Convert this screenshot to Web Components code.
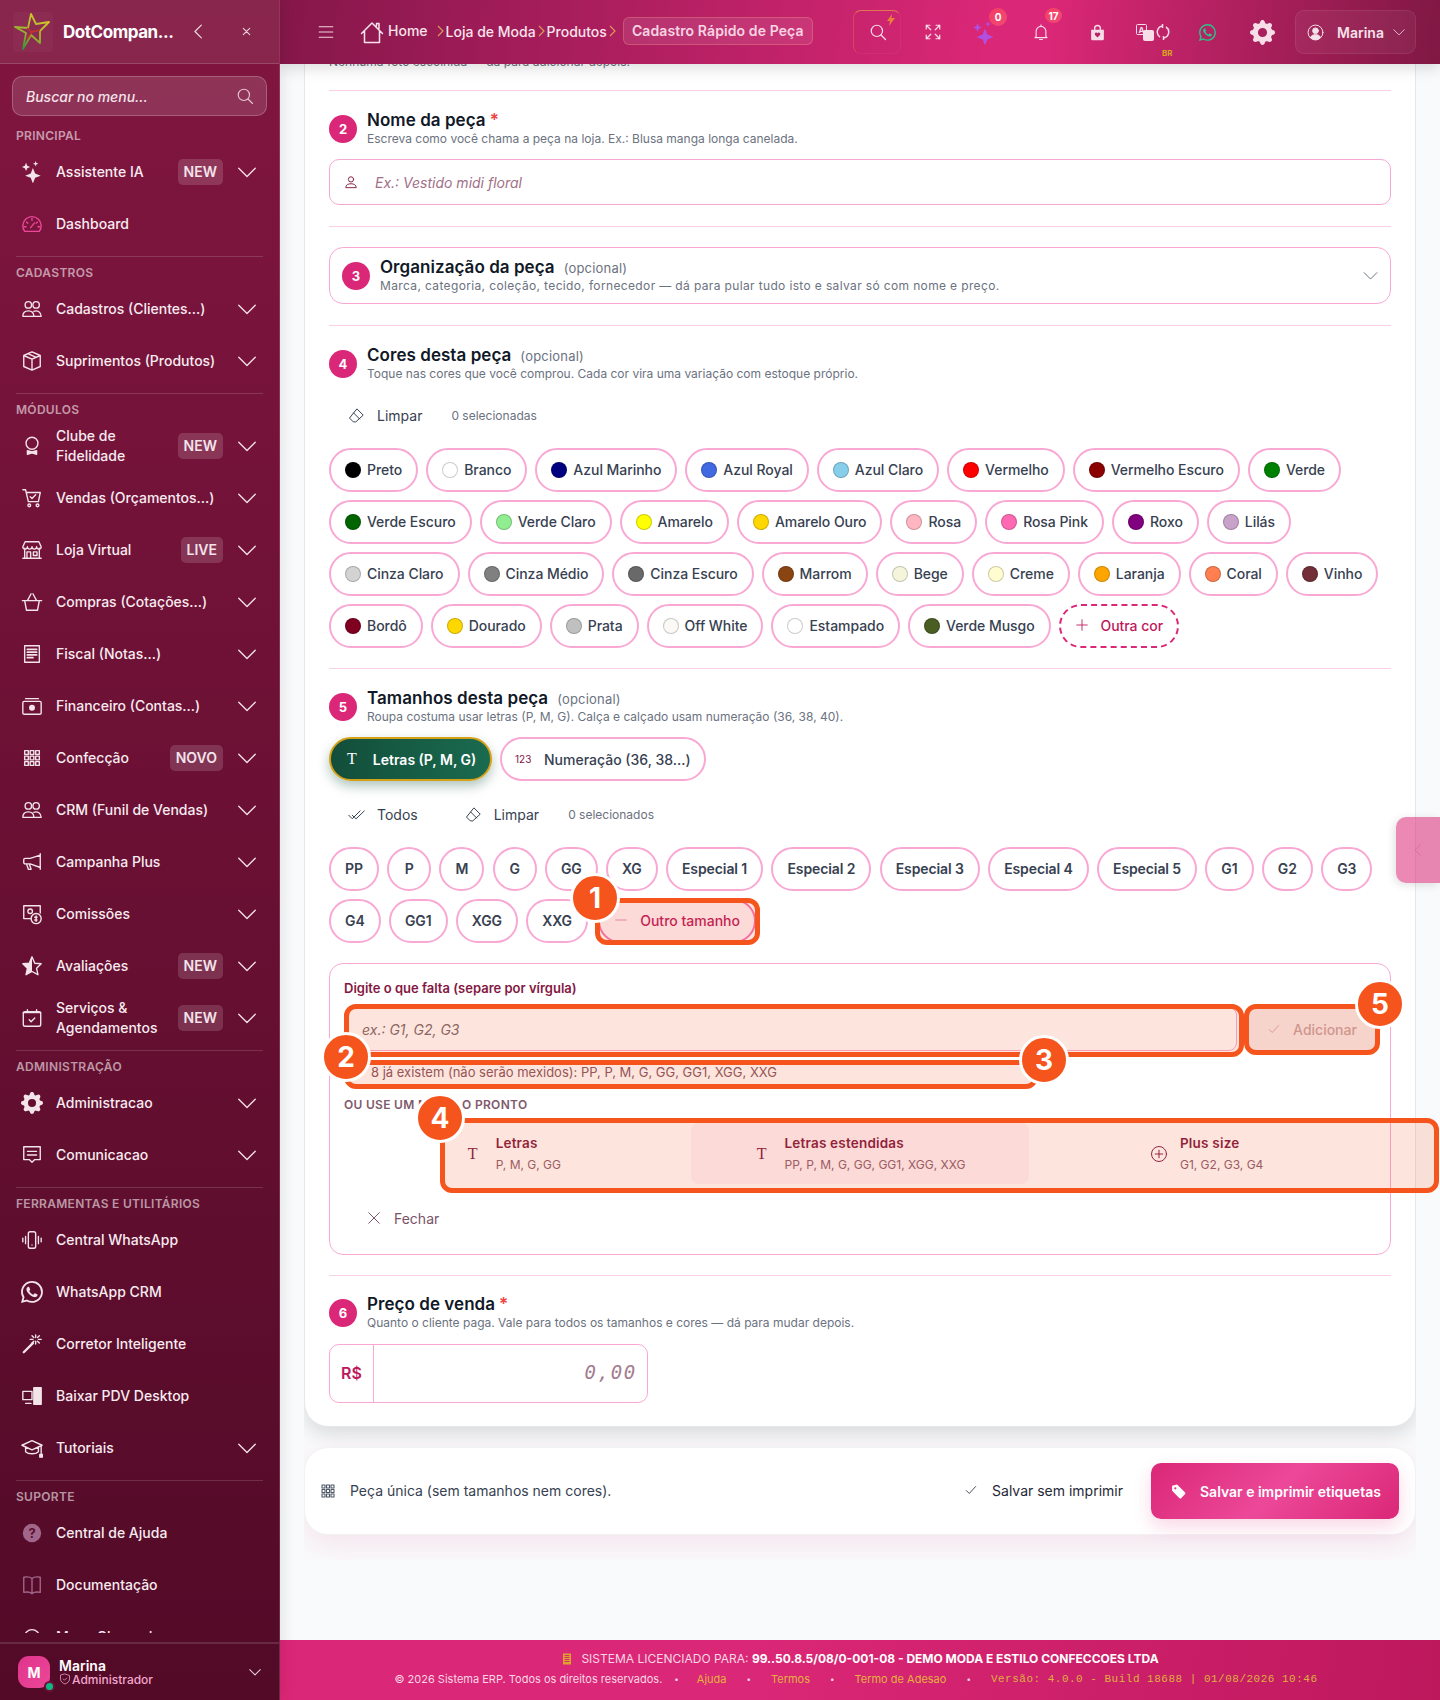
<!doctype html>
<html lang="pt-BR">
<head>
<meta charset="utf-8">
<title>Cadastro Rápido de Peça</title>
<style>
  html, body { margin: 0; padding: 0; height: 100%; }
  body { font-family: Inter, "Liberation Sans", sans-serif; background: #f9fafb; color: #1f2937; }
</style>
</head>
<body>
<app-shell>
  <side-bar slot="side">
    <nav-group heading="PRINCIPAL" first>
      <nav-item icon="sparkles" badge="NEW" more>Assistente IA</nav-item>
      <nav-item icon="gauge" tint="#ec4899">Dashboard</nav-item>
    </nav-group>
    <nav-group heading="CADASTROS">
      <nav-item icon="users" more>Cadastros (Clientes...)</nav-item>
      <nav-item icon="box" more>Suprimentos (Produtos)</nav-item>
    </nav-group>
    <nav-group heading="MÓDULOS">
      <nav-item icon="award" badge="NEW" more>Clube de Fidelidade</nav-item>
      <nav-item icon="cart" more>Vendas (Orçamentos...)</nav-item>
      <nav-item icon="shop" badge="LIVE" more>Loja Virtual</nav-item>
      <nav-item icon="basket" more>Compras (Cotações...)</nav-item>
      <nav-item icon="receipt" more>Fiscal (Notas...)</nav-item>
      <nav-item icon="cash" more>Financeiro (Contas...)</nav-item>
      <nav-item icon="grid" badge="NOVO" more>Confecção</nav-item>
      <nav-item icon="users" more>CRM (Funil de Vendas)</nav-item>
      <nav-item icon="megaphone" more>Campanha Plus</nav-item>
      <nav-item icon="coin" more>Comissões</nav-item>
      <nav-item icon="star" badge="NEW" more>Avaliações</nav-item>
      <nav-item icon="calendar" badge="NEW" more>Serviços &amp; Agendamentos</nav-item>
    </nav-group>
    <nav-group heading="ADMINISTRAÇÃO">
      <nav-item icon="gear" more>Administracao</nav-item>
      <nav-item icon="chat" more>Comunicacao</nav-item>
    </nav-group>
    <nav-group heading="FERRAMENTAS E UTILITÁRIOS">
      <nav-item icon="phone">Central WhatsApp</nav-item>
      <nav-item icon="whatsapp">WhatsApp CRM</nav-item>
      <nav-item icon="magic">Corretor Inteligente</nav-item>
      <nav-item icon="pc">Baixar PDV Desktop</nav-item>
      <nav-item icon="school" more>Tutoriais</nav-item>
    </nav-group>
    <nav-group heading="SUPORTE">
      <nav-item icon="help" tint="#a0678a">Central de Ajuda</nav-item>
      <nav-item icon="book" tint="#a0678a">Documentação</nav-item>
      <nav-item icon="headset">Meus Chamados</nav-item>
    </nav-group>
  </side-bar>

  <top-bar slot="top"></top-bar>

  <form-card>
    <p-hint>Nenhuma foto escolhida — dá para adicionar depois.</p-hint>
    <h-rule></h-rule>

    <step-head num="2" heading="Nome da peça" req>Escreva como você chama a peça na loja. Ex.: Blusa manga longa canelada.</step-head>
    <text-box icon="person">Ex.: Vestido midi floral</text-box>
    <h-rule></h-rule>

    <org-box></org-box>
    <h-rule></h-rule>

    <step-head num="4" heading="Cores desta peça" opt>Toque nas cores que você comprou. Cada cor vira uma variação com estoque próprio.</step-head>
    <tool-row count="0 selecionadas"></tool-row>
    <pill-wrap style="margin-bottom:-1px">
      <color-pill c="#000000">Preto</color-pill>
      <color-pill c="#ffffff">Branco</color-pill>
      <color-pill c="#000080">Azul Marinho</color-pill>
      <color-pill c="#4169e1">Azul Royal</color-pill>
      <color-pill c="#87ceeb">Azul Claro</color-pill>
      <color-pill c="#ff0000">Vermelho</color-pill>
      <color-pill c="#8b0000">Vermelho Escuro</color-pill>
      <color-pill c="#008000">Verde</color-pill>
      <color-pill c="#006400">Verde Escuro</color-pill>
      <color-pill c="#90ee90">Verde Claro</color-pill>
      <color-pill c="#ffff00">Amarelo</color-pill>
      <color-pill c="#ffd700">Amarelo Ouro</color-pill>
      <color-pill c="#ffb6c1">Rosa</color-pill>
      <color-pill c="#ff69b4">Rosa Pink</color-pill>
      <color-pill c="#800080">Roxo</color-pill>
      <color-pill c="#c8a2c8">Lilás</color-pill>
      <color-pill c="#d3d3d3">Cinza Claro</color-pill>
      <color-pill c="#808080">Cinza Médio</color-pill>
      <color-pill c="#696969">Cinza Escuro</color-pill>
      <color-pill c="#8b4513">Marrom</color-pill>
      <color-pill c="#f5f5dc">Bege</color-pill>
      <color-pill c="#fffdd0">Creme</color-pill>
      <color-pill c="#ffa500">Laranja</color-pill>
      <color-pill c="#ff7f50">Coral</color-pill>
      <color-pill c="#722f37">Vinho</color-pill>
      <color-pill c="#800020">Bordô</color-pill>
      <color-pill c="#ffd700">Dourado</color-pill>
      <color-pill c="#c0c0c0">Prata</color-pill>
      <color-pill c="#faf9f6">Off White</color-pill>
      <color-pill c="#ffffff">Estampado</color-pill>
      <color-pill c="#4a5d23">Verde Musgo</color-pill>
      <color-pill extra>Outra cor</color-pill>
    </pill-wrap>
    <h-rule></h-rule>

    <step-head num="5" heading="Tamanhos desta peça" opt>Roupa costuma usar letras (P, M, G). Calça e calçado usam numeração (36, 38, 40).</step-head>
    <mode-toggle></mode-toggle>
    <tool-row all count="0 selecionados"></tool-row>
    <pill-wrap wide>
      <size-pill>PP</size-pill><size-pill>P</size-pill><size-pill>M</size-pill><size-pill>G</size-pill>
      <size-pill>GG</size-pill><size-pill>XG</size-pill><size-pill>Especial 1</size-pill><size-pill>Especial 2</size-pill>
      <size-pill>Especial 3</size-pill><size-pill>Especial 4</size-pill><size-pill>Especial 5</size-pill>
      <size-pill>G1</size-pill><size-pill>G2</size-pill><size-pill>G3</size-pill><size-pill>G4</size-pill>
      <size-pill>GG1</size-pill><size-pill>XGG</size-pill><size-pill>XXG</size-pill>
      <size-pill active>Outro tamanho</size-pill>
    </pill-wrap>
    <size-panel></size-panel>
    <h-rule style="margin-top:20px"></h-rule>

    <step-head num="6" heading="Preço de venda" req style="margin-top:-1px">Quanto o cliente paga. Vale para todos os tamanhos e cores — dá para mudar depois.</step-head>
    <price-box></price-box>
  </form-card>

  <action-bar></action-bar>

  <bottom-bar slot="foot"></bottom-bar>

  <side-tab slot="over"></side-tab>
  <anno-box slot="over" x="595" y="898" w="165" h="47"></anno-box>
  <anno-box slot="over" x="344" y="1004" w="900" h="53"></anno-box>
  <anno-box slot="over" x="344" y="1060" w="694" h="29" flat></anno-box>
  <anno-box slot="over" x="440" y="1118" w="999" h="75"></anno-box>
  <anno-box slot="over" x="1244" y="1004" w="136" h="51"></anno-box>
  <anno-num slot="over" x="595" y="898">1</anno-num>
  <anno-num slot="over" x="346" y="1057">2</anno-num>
  <anno-num slot="over" x="1044" y="1060">3</anno-num>
  <anno-num slot="over" x="440" y="1118">4</anno-num>
  <anno-num slot="over" x="1380" y="1004">5</anno-num>
</app-shell>

<script>
/**
 * Icon bodies. Most use a 24 box with strokes, the ones marked fill16 are filled in a 16 box.
 */
const GEAR = 'M9.405 1.05c-.413-1.4-2.397-1.4-2.81 0l-.1.34a1.464 1.464 0 0 1-2.105.872l-.31-.17c-1.283-.698-2.686.705-1.987 1.987l.169.311c.446.82.023 1.841-.872 2.105l-.34.1c-1.4.413-1.4 2.397 0 2.81l.34.1a1.464 1.464 0 0 1 .872 2.105l-.17.31c-.698 1.283.705 2.686 1.987 1.987l.311-.169a1.464 1.464 0 0 1 2.105.872l.1.34c.413 1.4 2.397 1.4 2.81 0l.1-.34a1.464 1.464 0 0 1 2.105-.872l.31.17c1.283.698 2.686-.705 1.987-1.987l-.169-.311a1.464 1.464 0 0 1 .872-2.105l.34-.1c1.4-.413 1.4-2.397 0-2.81l-.34-.1a1.464 1.464 0 0 1-.872-2.105l.17-.31c.698-1.283-.705-2.686-1.987-1.987l-.311.169a1.464 1.464 0 0 1-2.105-.872l-.1-.34zM8 10.93a2.929 2.929 0 1 1 0-5.86 2.929 2.929 0 0 1 0 5.858z'
const WA = 'M13.601 2.326A7.854 7.854 0 0 0 7.994 0C3.627 0 .068 3.558.064 7.926c0 1.399.366 2.76 1.057 3.965L0 16l4.204-1.102a7.933 7.933 0 0 0 3.79.965h.004c4.368 0 7.926-3.558 7.93-7.93A7.898 7.898 0 0 0 13.6 2.326zM7.994 14.521a6.573 6.573 0 0 1-3.356-.92l-.24-.144-2.494.654.666-2.433-.156-.251a6.56 6.56 0 0 1-1.007-3.505c0-3.626 2.957-6.584 6.591-6.584a6.56 6.56 0 0 1 4.66 1.931 6.557 6.557 0 0 1 1.928 4.66c-.004 3.639-2.961 6.592-6.592 6.592zm3.615-4.934c-.197-.099-1.17-.578-1.353-.646-.182-.065-.315-.099-.445.099-.133.197-.513.646-.627.775-.114.133-.232.148-.43.05-.197-.1-.836-.308-1.592-.985-.59-.525-.985-1.175-1.103-1.372-.114-.198-.011-.304.088-.403.087-.088.197-.232.296-.346.1-.114.133-.198.198-.33.065-.134.034-.248-.015-.347-.05-.099-.445-1.076-.612-1.47-.16-.389-.323-.335-.445-.34-.114-.007-.247-.007-.38-.007a.729.729 0 0 0-.529.247c-.182.198-.691.677-.691 1.654 0 .977.71 1.916.81 2.049.098.133 1.394 2.132 3.383 2.992.47.205.84.326 1.129.418.475.152.904.129 1.246.08.38-.058 1.171-.48 1.338-.943.164-.464.164-.86.114-.943-.049-.084-.182-.133-.38-.232z'
const ICONS = {
  sparkles: '<path fill="currentColor" stroke="none" d="M13 7.500l2.400 6.100 6.100 2.400-6.100 2.400L13 24.500l-2.400-6.100L4.500 16l6.100-2.400zM5.500 2l1.300 3.200L10 6.500 6.800 7.800 5.500 11 4.200 7.800 1 6.500l3.200-1.300zM16 0l.8 2.200 2.200.8-2.200.8L16 6l-.8-2.200L13 3l2.200-.8z"/>',
  gauge: '<path d="M4 20a10 10 0 1 1 16 0z"/><path d="M12 6v2M6 10l1.500 1M18 10l-1.500 1M10.500 16l4-5M3.500 15h2M18.500 15h2"/>',
  users: '<circle cx="8" cy="7.500" r="3.500"/><circle cx="16.500" cy="7.500" r="3.500"/><path d="M2 20c0-4 2.500-6 6-6s6 2 6 6zM14 14.500c4-1.500 8 1 8 5.500h-8"/>',
  box: '<path d="M12 2l9 4v12l-9 4-9-4V6zM3 6l9 4 9-4M12 10v12M7.500 4l9 4"/>',
  award: '<circle cx="12" cy="9" r="6.500"/><path fill="currentColor" d="M7 17l5 1.500L17 17v4l-5-1.500L7 21z"/>',
  cart: '<path d="M2 3h3l3 13h11l2-10H6"/><circle cx="9" cy="20" r="1.500"/><circle cx="18" cy="20" r="1.500"/><path d="M10 10.500l2 2 4-4"/>',
  shop: '<path d="M4 10v11h16V10M2 21h20M4.500 3h15l2.500 5.500a2.500 2.500 0 0 1-5 0 2.500 2.500 0 0 1-5 0 2.500 2.500 0 0 1-5 0 2.500 2.500 0 0 1-5 0zM6.500 14h4v7h-4zM13.500 14h4v4h-4z"/>',
  basket: '<path d="M1.500 10.500h21M4 10.500L6 21h12l2-10.500M7 10.500L11 3M17 10.500L13 3"/>',
  receipt: '<path d="M4 3h16v18H4z"/><path d="M7 7h10M7 10h10M7 13h10M7 16h6" stroke-width="2"/>',
  cash: '<rect x="2" y="7" width="20" height="14" rx="1.500"/><path d="M5 4h14"/><circle cx="12" cy="14" r="2.500" fill="currentColor"/>',
  grid: '<path d="M4 4h4v4H4zM10 4h4v4h-4zM16 4h4v4h-4zM4 10h4v4H4zM10 10h4v4h-4zM16 10h4v4h-4zM4 16h4v4H4zM10 16h4v4h-4zM16 16h4v4h-4z"/>',
  megaphone: '<path d="M21 3v17M21 4.500L10 8H4.500A1.500 1.500 0 0 0 3 9.500v3A1.500 1.500 0 0 0 4.500 14H10l11 4M6 14l2 6h3l-2-6"/>',
  coin: '<path d="M11 17H3V3h18v8"/><circle cx="10" cy="9" r="2.500"/><circle cx="16.500" cy="17" r="5.500"/><path d="M16.500 14v6M15 15.500h2.500M15 18.500h2.500"/>',
  star: '<path fill="currentColor" stroke="none" d="M12 2v16l-6.500 3.500L7 14.500l-5-5L9 9z"/><path d="M12 2l3 7 7 .5-5 5 1.500 7L12 18l-6.500 3.500L7 14.500l-5-5L9 9z"/>',
  calendar: '<rect x="2.500" y="5" width="19" height="16" rx="2"/><path d="M7 3v3M17 3v3M2.500 6h19M9 14l2 2 4-4"/>',
  gear: '<g transform="scale(1.500)" fill="currentColor" stroke="none"><path d="' + GEAR + '"/></g>',
  chat: '<path d="M3 3h18v14h-6l-3 3-3-3H3zM7 8h10M7 12h10"/>',
  phone: '<rect x="8" y="3" width="8" height="18" rx="2"/><path d="M5 8v8M19 8v8M2 10v4M22 10v4M12 17.500v.01"/>',
  whatsapp: '<g transform="scale(1.500)" fill="currentColor" stroke="none"><path d="' + WA + '"/></g>',
  magic: '<path d="M3 21L13 11" stroke-width="2.500"/><path d="M16 2v3M16 9v3M10 7h3M19 7h3M12 3l2 2M20 3l-2 2M12 11l2-2M20 11l-2-2"/>',
  pc: '<path d="M2 7h10v9H2zM5 20h6"/><path fill="currentColor" d="M14 3h8v18h-8z"/>',
  school: '<path d="M12 4L1 9l11 5 11-5zM5 11v5c3 3 11 3 14 0v-5M22 10v8"/><rect x="20.500" y="19" width="3" height="3" fill="currentColor"/>',
  help: '<circle cx="12" cy="12" r="10" fill="currentColor" stroke="none"/><text x="12" y="17" text-anchor="middle" font-size="14" font-weight="700" fill="#5c0d2e" stroke="none" font-family="Inter, sans-serif">?</text>',
  book: '<path d="M12 5C10 3 6 3 3 3.500V20c3-.5 7-.5 9 1.500 2-2 6-2 9-1.500V3.500C18 3 14 3 12 5zM12 5v16.500"/>',
  headset: '<path d="M4 14v-2a8 8 0 0 1 16 0v2"/>',
  chevDown: '<path d="M3 8l9 9 9-9"/>',
  chevLeft: '<path d="M16 3l-9 9 9 9"/>',
  x: '<path d="M5 5l14 14M19 5L5 19"/>',
  search: '<circle cx="10.500" cy="10.500" r="7.500"/><path d="M16 16l6 6"/>',
  home: '<path d="M1.500 12.500L12 2l10.500 10.500M4.500 10v11.500h15V10M16.500 5V2.500h2.500v5"/>',
  list: '<path d="M3 5h18M3 12h18M3 19h18"/>',
  full: '<path d="M3 8V3h5M3 3l6 6M21 8V3h-5M21 3l-6 6M3 16v5h5M3 21l6-6M21 16v5h-5M21 21l-6-6"/>',
  bell: '<path d="M5.500 18v-7a6.500 6.500 0 0 1 13 0v7l1.500 1.500H4zM10 22h4M12 2.500v2"/>',
  bag: '<path fill="currentColor" stroke="none" d="M3 8h18v13a2 2 0 0 1-2 2H5a2 2 0 0 1-2-2z"/><path d="M8 8V6a4 4 0 0 1 8 0v2" stroke-width="2"/><path fill="#b92262" stroke="none" d="M12 19l-3.500-3.500a2 2 0 0 1 3.500-2.500 2 2 0 0 1 3.500 2.500z"/>',
  userCircle: '<circle cx="12" cy="12" r="10.500"/><circle cx="12" cy="9.500" r="4" fill="currentColor"/><path fill="currentColor" d="M5 19c1-3 4-4 7-4s6 1 7 4c-2 2-4.500 3-7 3s-5-1-7-3z"/>',
  person: '<circle cx="12" cy="7.500" r="4.500"/><path d="M3 21c0-4 4-6 9-6s9 2 9 6z"/>',
  eraser: '<path d="M13 3l8.500 8.500L11 21H7.500L2.500 16zM8 8.500L16.500 17"/>',
  check: '<path d="M4 13l5 5L20 6"/>',
  checkAll: '<path d="M1 13l5 5L17 7M10 17l1.500 1L23 7M6 13l3 3"/>',
  plus: '<path d="M12 3v18M3 12h18"/>',
  dash: '<path d="M3 12h18"/>',
  plusCircle: '<circle cx="12" cy="12" r="10"/><path d="M12 7v10M7 12h10"/>',
  tag: '<path fill="currentColor" stroke="none" d="M3 4l7-2 11 11a2 2 0 0 1 0 3l-5 5a2 2 0 0 1-3 0L3 11zM7.500 6a1.500 1.500 0 1 0 .01 3 1.500 1.500 0 0 0-.01-3z"/>',
  building: '<path fill="currentColor" stroke="none" d="M4 1h16v22H4z"/><path stroke="#d92775" stroke-width="2" d="M8 5h8M8 9h8M8 13h8M8 17h8"/>',
  shield: '<path d="M12 2l9 3v7c0 5-4 8-9 10-5-2-9-5-9-10V5zM8.500 12l2.500 2.500 4.500-4.500"/>'
}

/**
 * Small helper, builds one inline svg string.
 *
 * @param {string} name Key in ICONS.
 * @param {number} size Width and height in pixels.
 * @param {number} sw Stroke width in the 24 box.
 * @returns {string} The markup.
 */
function ic (name, size, sw = 1.5) {
  return `<svg width="${size}" height="${size}" viewBox="0 0 24 24" fill="none" stroke="currentColor" stroke-width="${sw}" stroke-linecap="round" stroke-linejoin="round" style="display:block;flex:none">${ICONS[name]}</svg>`
}

/**
 * Base class: renders the html given by render() in an open shadow root.
 */
class Base extends HTMLElement {
  constructor () {
    super()
    this.attachShadow({ mode: 'open' })
  }

  connectedCallback () {
    this.shadowRoot.innerHTML = this.render()
  }
}

class AppShell extends Base {
  render () {
    return `<style>
      :host { display: grid; grid-template-columns: 280px 1fr; grid-template-rows: 64px 1fr 60px; height: 1700px; width: 1440px; position: relative; overflow: hidden; }
      .side { grid-row: 1 / 4; z-index: 3; min-height: 0; display: flex; }
      .top { z-index: 2; }
      .main { min-height: 0; position: relative; background: #f9fafb; }
      .scroll { margin: 0 24px; height: 1496px; overflow: hidden; }
      .foot { z-index: 2; }
      .over { position: absolute; left: 0; top: 0; width: 0; height: 0; z-index: 1; }
    </style>
    <div class="side"><slot name="side"></slot></div>
    <div class="top"><slot name="top"></slot></div>
    <div class="main"><div class="scroll"><slot></slot></div></div>
    <div class="foot"><slot name="foot"></slot></div>
    <div class="over"><slot name="over"></slot></div>`
  }
}
customElements.define('app-shell', AppShell)

class SideBar extends Base {
  render () {
    return `<style>
      :host { display: flex; flex-direction: column; width: 280px; height: 1700px; box-sizing: border-box; background: linear-gradient(180deg, #811640 0%, #520a27 100%); border-right: 1px solid rgba(255,255,255,.14); box-shadow: 2px 0 14px rgba(0,0,0,.1); color: #fff; }
      header { height: 64px; flex: none; box-sizing: border-box; display: flex; align-items: center; background: rgba(255,255,255,.07); border-bottom: 1px solid rgba(255,255,255,.16); padding-left: 13px; }
      .logo { width: 40px; height: 40px; flex: none; }
      .brand { font-size: 17px; font-weight: 700; letter-spacing: -.45px; margin-left: 10px; width: 112px; white-space: nowrap; }
      .back { margin-left: 15px; color: #ecd3dd; }
      .close { margin-left: 34px; color: #ecd3dd; }
      .search { margin: 12px 12px 12px; height: 40px; box-sizing: border-box; flex: none; border: 1px solid rgba(255,255,255,.22); border-radius: 10px; background: rgba(255,255,255,.13); display: flex; align-items: center; justify-content: space-between; padding: 0 12px 0 13px; font-size: 14px; font-style: italic; font-weight: 500; color: #f5e3ea; }
      .search svg { color: #e7c6d3; }
      nav { height: 1505px; flex: none; overflow: hidden; padding: 0 12px; display: flex; flex-direction: column; }
      .user { margin-top: 9px; flex: 1; box-sizing: border-box; border-top: 2px solid rgba(255,255,255,.13); display: flex; align-items: center; padding-left: 18px; position: relative; }
      .ava { width: 32px; height: 32px; border-radius: 11px; background: linear-gradient(135deg, #e0338b, #ec4899); display: grid; place-items: center; font-size: 14px; font-weight: 700; position: relative; flex: none; }
      .ava i { position: absolute; right: -3px; bottom: -2px; width: 7px; height: 7px; border-radius: 50%; background: #10b981; box-shadow: 0 0 0 2px #6b0f3a; }
      .who { margin-left: 9px; line-height: 13px; }
      .who b { display: block; font-size: 14px; font-weight: 600; line-height: 14px; }
      .who span { display: flex; align-items: center; font-size: 12px; font-weight: 500; color: #f3a6cd; gap: 1px; }
      .caret { position: absolute; left: 248px; top: 21px; color: #e6cdd8; }
    </style>
    <header>
      <svg class="logo" viewBox="0 0 40 40" fill="none">
        <defs><linearGradient id="lg" x1="0.7" y1="0" x2="0.2" y2="1"><stop offset="0" stop-color="#d8c52a"/><stop offset=".55" stop-color="#9fb52e"/><stop offset="1" stop-color="#2f8f3a"/></linearGradient></defs>
        <rect width="40" height="40" rx="4" fill="#fff" fill-opacity=".03"/>
        <path d="M18 2l5 10 13-2-9 9 0 12-9-8-8 14 3-16-11-6 13 1z" stroke="url(#lg)" stroke-width="1.800" stroke-linejoin="round"/>
        <path d="M14 16l5 4-5 7M27 18l-9 2" stroke="#c4352b" stroke-width="1.300"/></svg>
      <div class="brand">DotCompan...</div>
      <div class="back">${ic('chevLeft', 17, 1.8)}</div>
      <div class="close">${ic('x', 11, 2.4)}</div>
    </header>
    <div class="search"><span>Buscar no menu...</span>${ic('search', 18)}</div>
    <nav><slot></slot></nav>
    <div class="user">
      <div class="ava">M<i></i></div>
      <div class="who"><b>Marina</b><span>${ic('shield', 12)}Administrador</span></div>
      <div class="caret">${ic('chevDown', 14, 1.8)}</div>
    </div>`
  }
}
customElements.define('side-bar', SideBar)

class NavGroup extends Base {
  render () {
    const first = this.hasAttribute('first')
    return `<style>
      :host { display: flex; flex-direction: column; gap: 4px; flex: none; }
      hr { border: 0; height: 1px; background: rgba(255,255,255,.15); margin: 8px 4px; width: 247px; box-sizing: border-box; }
      .t { font-size: 12px; line-height: 16px; font-weight: 600; color: rgba(255,255,255,.58); padding-left: 4px; letter-spacing: .3px; white-space: nowrap; }
      .l { display: flex; flex-direction: column; gap: 4px; }
      .wrap { display: block; }
    </style>
    <div class="wrap">${first ? '' : '<hr>'}<div class="t">${this.getAttribute('heading')}</div></div>
    <div class="l"><slot></slot></div>`
  }
}
customElements.define('nav-group', NavGroup)

class NavItem extends Base {
  render () {
    const badge = this.getAttribute('badge')
    const tint = this.getAttribute('tint')
    return `<style>
      :host { display: flex; align-items: center; height: 48px; flex: none; box-sizing: border-box; padding: 0 9px 0 9px; color: #f7ebf0; font-size: 14px; font-weight: 500; line-height: 20px; }
      .i { width: 22px; height: 22px; margin-right: 13px; flex: none; color: ${tint || '#f3e4ea'}; }
      .tx { flex: 1; min-width: 0; }
      .b { flex: none; height: 26px; line-height: 26px; padding: 0 6px; border-radius: 5px; background: rgba(255,255,255,.15); font-weight: 600; color: #f4e3ea; margin-left: 6px; margin-right: 13px; }
      .c { flex: none; color: #f0dfe6; }
    </style>
    <div class="i">${ic(this.getAttribute('icon'), 22)}</div>
    <div class="tx"><slot></slot></div>
    ${badge ? `<div class="b">${badge}</div>` : ''}
    ${this.hasAttribute('more') ? `<div class="c">${ic('chevDown', 22, 1.5)}</div>` : ''}`
  }
}
customElements.define('nav-item', NavItem)

class TopBar extends Base {
  render () {
    const sep = '<svg width="7" height="12" viewBox="0 0 7 12" fill="none" stroke="#d99a55" stroke-width="1.200" style="flex:none"><path d="M1 1l5 5-5 5"/></svg>'
    return `<style>
      :host { display: flex; align-items: center; height: 64px; box-sizing: border-box; background: linear-gradient(95deg, #85174a 0%, #db2777 62%, #db2777 66%, #7f1843 100%); box-shadow: 0 4px 14px rgba(0,0,0,.14); color: #f9e3ec; font-size: 14px; font-weight: 500; position: relative; }
      .burger { margin-left: 37px; width: 18px; color: #f3d3e0; }
      .crumbs { display: flex; align-items: center; margin-left: 25px; margin-bottom: 2px; white-space: nowrap; }
      .crumbs .home { display: flex; align-items: center; gap: 4px; margin-right: 9px; }
      .crumbs .home svg { position: relative; top: 2px; }
      .crumbs .home span { position: relative; top: -1px; }
      .cur { margin-left: 7px; height: 28px; line-height: 26px; box-sizing: border-box; padding: 0 8px; border: 1px solid rgba(255,190,140,.25); border-radius: 6px; background: rgba(255,255,255,.09); font-weight: 600; color: #f8d3e2; letter-spacing: .1px; }
      .tools { position: absolute; left: 570px; top: 0; display: flex; height: 64px; align-items: center; }
      .t { width: 55px; height: 44px; display: grid; place-items: center; position: relative; color: #f6dde8; }
      .sb { position: absolute; left: 3px; top: 0; width: 46px; height: 42px; border-radius: 8px; border: 1px solid rgba(255,255,255,.05); border-top-color: rgba(240,150,70,.7); border-left-color: rgba(240,150,70,.3); }
      .bolt { position: absolute; left: 37px; top: 4px; }
      .n { position: absolute; border-radius: 50%; background: linear-gradient(135deg, #f43f5e, #ef4a78); color: #fff; font-size: 10px; font-weight: 700; width: 18px; height: 18px; display: grid; place-items: center; }
      .tr { display: flex; gap: 2px; align-items: center; }
      .br { position: absolute; left: 37px; top: 38px; font-size: 8px; font-weight: 700; color: #d9a520; }
      .user { position: absolute; left: 1015px; top: 10px; width: 121px; height: 44px; box-sizing: border-box; border: 1px solid rgba(255,255,255,.08); border-radius: 9px; background: rgba(255,255,255,.05); display: flex; align-items: center; padding-left: 11px; font-weight: 600; color: #f6e1ea; }
      .user b { font-weight: 600; margin-left: 13px; margin-right: 8px; }
    </style>
    <div class="burger">${ic('list', 18, 1.6)}</div>
    <div class="crumbs">
      <div class="home">${ic('home', 24)}<span>Home</span></div>
      ${sep}
      <span style="margin:0 2px 0 2px">Loja de Moda</span>
      ${sep}
      <span style="margin:0 2px 0 2px">Produtos</span>
      ${sep}
      <div class="cur">Cadastro Rápido de Peça</div>
    </div>
    <div class="tools">
      <div class="t"><div class="sb"></div>${ic('search', 18, 1.6)}<svg class="bolt" width="8" height="12" viewBox="0 0 8 12"><path fill="#e8803a" d="M5 0L0 7h3l-1 5 6-8H4.500z"/></svg></div>
      <div class="t">${ic('full', 18, 1.6)}</div>
      <div class="t" style="color:#b04fe0"><div style="position:relative;top:1px;left:-4px">${ic('sparkles', 24)}</div><div class="n" style="left:29px;top:-2px">0</div></div>
      <div class="t" style="left:-2px">${ic('bell', 18, 1.5)}<div class="n" style="left:32px;top:-2px;height:15px;width:17px">17</div></div>
      <div class="t">${ic('bag', 17)}</div>
      <div class="t"><div class="tr"><svg width="18" height="17" viewBox="0 0 18 17" fill="none" stroke="currentColor"><rect x=".5" y=".5" width="10" height="10" rx="1"/><rect x="7.500" y="6.500" width="10" height="10" rx="1" fill="currentColor"/><text x="5.500" y="8.500" text-anchor="middle" font-size="8" font-weight="700" fill="currentColor" stroke="none" font-family="Inter, sans-serif">A</text></svg><svg width="14" height="16" viewBox="0 0 14 16" fill="none" stroke="currentColor" stroke-width="1.500"><path d="M7 2a6 6 0 0 0-3 11M7 14a6 6 0 0 0 3-11"/><path fill="currentColor" d="M6.500 0v4M7.500 12v4"/></svg></div><div class="br">BR</div></div>
      <div class="t" style="color:#2bc48a">${ic('whatsapp', 17)}</div>
      <div class="t">${`<svg width="25" height="25" viewBox="0 0 16 16" fill="currentColor"><path d="${GEAR}"/></svg>`}</div>
    </div>
    <div class="user">${ic('userCircle', 17, 1.4)}<b>Marina</b><span style="color:#e7bccd">${ic('chevDown', 14, 1.6)}</span></div>`
  }
}
customElements.define('top-bar', TopBar)

class FormCard extends Base {
  render () {
    return `<style>
      :host { display: flow-root; box-sizing: border-box; background: #fff; border: 1px solid #e5e7eb; border-top: 0; border-radius: 0 0 24px 24px; padding: 0 24px 24px; box-shadow: 0 8px 18px rgba(0,0,0,.12); height: 1363px; }
    </style><slot></slot>`
  }
}
customElements.define('form-card', FormCard)

class PHint extends Base {
  render () {
    return `<style>
      :host { display: block; height: 14px; line-height: 14px; margin-top: -9px; font-size: 12px; color: #6b7280; word-spacing: .1px; }
    </style><slot></slot>`
  }
}
customElements.define('p-hint', PHint)

class HRule extends Base {
  render () {
    return `<style>
      :host { display: block; height: 1px; background: #fbcfe8; margin: 21px 0 20px; }
    </style>`
  }
}
customElements.define('h-rule', HRule)

class StepHead extends Base {
  render () {
    const opt = this.hasAttribute('opt')
    const req = this.hasAttribute('req')
    return `<style>
      :host { display: flex; align-items: center; gap: 10px; height: 36px; }
      .n { width: 28px; height: 28px; border-radius: 50%; background: #db2777; color: #fff; font-size: 13px; font-weight: 700; display: grid; place-items: center; flex: none; }
      .h { display: flex; align-items: baseline; line-height: 18px; height: 18px; white-space: nowrap; }
      .h b { font-size: 17px; font-weight: 600; color: #111827; letter-spacing: .05px; }
      .h i { font-style: normal; font-size: 13px; color: #6b7280; margin-left: 9px; letter-spacing: .2px; }
      .h u { text-decoration: none; color: #ef4444; margin-left: 4px; font-size: 17px; font-weight: 600; }
      .s { font-size: 12px; line-height: 18px; color: #6b7280; white-space: nowrap; position: relative; top: 1px; }
    </style>
    <div class="n">${this.getAttribute('num')}</div>
    <div>
      <div class="h"><b>${this.getAttribute('heading')}</b>${req ? '<u>*</u>' : ''}${opt ? '<i>(opcional)</i>' : ''}</div>
      <div class="s"><slot></slot></div>
    </div>`
  }
}
customElements.define('step-head', StepHead)

class TextBox extends Base {
  render () {
    return `<style>
      :host { display: flex; align-items: center; height: 46px; box-sizing: border-box; margin-top: 12px; border: 1px solid #f4a9d0; border-radius: 10px; padding-left: 14px; font-size: 14px; font-style: italic; color: #a17088; }
      .i { color: #831843; width: 14px; margin-right: 17px; }
    </style>
    <div class="i">${ic(this.getAttribute('icon'), 14, 1.6)}</div><slot></slot>`
  }
}
customElements.define('text-box', TextBox)

class OrgBox extends Base {
  render () {
    return `<style>
      :host { display: flex; align-items: center; height: 57px; box-sizing: border-box; border: 1px solid #f9a8d4; border-radius: 14px; padding: 0 11px 0 12px; }
      .n { width: 28px; height: 28px; border-radius: 50%; background: #db2777; color: #fff; font-size: 13px; font-weight: 700; display: grid; place-items: center; flex: none; margin-right: 10px; }
      .t { flex: 1; padding-top: 2px; }
      .h { line-height: 18px; white-space: nowrap; }
      .h b { font-size: 17px; font-weight: 600; color: #111827; letter-spacing: .05px; }
      .h i { font-style: normal; font-size: 13px; color: #6b7280; margin-left: 9px; letter-spacing: .2px; }
      .s { font-size: 12px; line-height: 18px; color: #6b7280; white-space: nowrap; letter-spacing: .36px; }
      .c { color: #6b7280; }
    </style>
    <div class="n">3</div>
    <div class="t">
      <div class="h"><b>Organização da peça</b><i>(opcional)</i></div>
      <div class="s">Marca, categoria, coleção, tecido, fornecedor — dá para pular tudo isto e salvar só com nome e preço.</div>
    </div>
    <div class="c">${ic('chevDown', 17, 1.4)}</div>`
  }
}
customElements.define('org-box', OrgBox)

class ToolRow extends Base {
  render () {
    const btn = (icon, tx, gap) => `<div class="b" style="margin-right:${gap}px">${ic(icon, 17, 1.4)}<span>${tx}</span></div>`
    return `<style>
      :host { display: flex; align-items: center; height: 36px; margin: 15px 0 15px; padding-left: 19px; font-size: 14px; color: #1f2937; white-space: nowrap; }
      .b { display: flex; align-items: center; gap: 12px; color: #374151; }
      .cnt { font-size: 12px; color: #6b7280; }
    </style>
    ${this.hasAttribute('all') ? btn('checkAll', 'Todos', 47) : ''}
    ${btn('eraser', 'Limpar', 29)}
    <div class="cnt">${this.getAttribute('count')}</div>`
  }
}
customElements.define('tool-row', ToolRow)

class PillWrap extends Base {
  render () {
    return `<style>
      :host { display: flex; flex-wrap: wrap; gap: 8px ${this.hasAttribute('wide') ? 8.3 : 8}px; }
    </style><slot></slot>`
  }
}
customElements.define('pill-wrap', PillWrap)

class ColorPill extends Base {
  render () {
    const extra = this.hasAttribute('extra')
    return `<style>
      :host { display: inline-flex; align-items: center; height: 44px; box-sizing: border-box; border: 2px ${extra ? 'dashed #db2777' : 'solid #f9a8d4'}; border-radius: 22px; padding: 0 14px 2px; gap: ${extra ? 12 : 6}px; font-size: 14px; font-weight: 500; letter-spacing: -.05px; color: ${extra ? '#be185d' : '#374151'}; white-space: nowrap; }
      .d { width: 14px; height: 14px; border-radius: 50%; border: 1px solid rgba(0,0,0,.2); background: ${this.getAttribute('c')}; flex: none; position: relative; top: 1px; }
      .p { color: #be185d; }
    </style>
    ${extra ? `<div class="p">${ic('plus', 14, 1.5)}</div>` : '<div class="d"></div>'}
    <slot></slot>`
  }
}
customElements.define('color-pill', ColorPill)

class SizePill extends Base {
  render () {
    const on = this.hasAttribute('active')
    return `<style>
      :host { display: inline-flex; align-items: center; justify-content: center; height: 44px; min-width: 44px; box-sizing: border-box; border: 2px solid ${on ? '#f472b6' : '#f9a8d4'}; border-radius: 22px; padding: 0 14px 2px; gap: 12px; font-size: 14px; font-weight: ${on ? 500 : 600}; letter-spacing: ${on ? 0 : -0.1}px; color: ${on ? '#be185d' : '#374151'}; background: ${on ? '#fdf2f8' : '#fff'}; white-space: nowrap; ${on ? 'margin-left: 2px;' : ''} }
      .p { color: #be185d; opacity: .5; }
    </style>
    ${on ? `<div class="p">${ic('dash', 14, 1.5)}</div>` : ''}<slot></slot>`
  }
}
customElements.define('size-pill', SizePill)

class ModeToggle extends Base {
  render () {
    return `<style>
      :host { display: flex; gap: 8px; margin-top: 12px; }
      .m { height: 44px; box-sizing: border-box; border-radius: 22px; display: flex; align-items: center; font-size: 14px; white-space: nowrap; font-weight: 500; }
      .on { background: linear-gradient(90deg, #134e3b, #1a6b50); border: 2px solid #d4a017; color: #fff; font-weight: 600; box-shadow: 0 5px 12px rgba(20,83,63,.35); gap: 16px; width: 163px; padding-left: 16px; }
      .off { border: 2px solid #f9a8d4; color: #374151; gap: 11px; width: 206px; padding-left: 13px; }
      .T { font-family: "Liberation Serif", serif; font-size: 16px; font-weight: 400; }
      .num { font-size: 10px; color: #831843; font-weight: 400; width: 18px; }
    </style>
    <div class="m on"><span class="T">T</span><span>Letras (P, M, G)</span></div>
    <div class="m off"><span class="num">123</span><span>Numeração (36, 38...)</span></div>`
  }
}
customElements.define('mode-toggle', ModeToggle)

class SizePanel extends Base {
  render () {
    const preset = (icon, h, s, cls = '') => `<div class="pr ${cls}"><div class="pi">${icon}</div><div><b>${h}</b><small>${s}</small></div></div>`
    return `<style>
      :host { display: block; box-sizing: border-box; height: 292px; margin-top: 20px; border: 1px solid #f9a8d4; border-radius: 14px; padding: 16px 14px 0; }
      .l { font-size: 13px; line-height: 16px; font-weight: 600; color: #831843; margin-bottom: 11px; }
      .row { display: flex; gap: 11px; }
      .in { flex: 1; height: 44px; box-sizing: border-box; border: 1px solid #f9a8d4; border-radius: 8px; padding-left: 17px; display: flex; align-items: center; font-size: 14px; font-style: italic; color: #7a6a6f; }
      .add { width: 128px; height: 44px; box-sizing: border-box; border-radius: 10px; background: #f8ebea; color: #c9a3a3; display: flex; align-items: center; justify-content: center; gap: 12px; font-size: 14px; font-weight: 500; }
      .help { font-size: 13px; line-height: 16px; color: #86565f; padding-left: 27px; margin-top: 13px; }
      .or { font-size: 12px; line-height: 16px; font-weight: 600; color: #80596b; margin-top: 17px; letter-spacing: .3px; }
      .grid { display: grid; grid-template-columns: repeat(3, 1fr); gap: 8px; margin-top: 10px; }
      .pr { height: 61px; border-radius: 8px; display: flex; align-items: center; justify-content: center; gap: 16px; }
      .pr.hov { background: #fdf2f8; }
      .pi { color: #831843; font-family: "Liberation Serif", serif; font-size: 16px; display: grid; place-items: center; width: 14px; }
      .pr b { display: block; font-size: 13.5px; line-height: 18px; font-weight: 600; color: #831843; letter-spacing: .2px; }
      .pr small { display: block; font-size: 12px; line-height: 18px; margin-top: 4px; color: #8e5d70; }
      .close { display: flex; align-items: center; gap: 11px; height: 36px; margin-top: 16px; padding-left: 21px; font-size: 14px; color: #7a5368; }
    </style>
    <div class="l">Digite o que falta (separe por vírgula)</div>
    <div class="row">
      <div class="in">ex.: G1, G2, G3</div>
      <div class="add">${ic('check', 14, 1.5)}<span>Adicionar</span></div>
    </div>
    <div class="help">8 já existem (não serão mexidos): PP, P, M, G, GG, GG1, XGG, XXG</div>
    <div class="or">OU USE UM MODELO PRONTO</div>
    <div class="grid">
      ${preset('T', 'Letras', 'P, M, G, GG')}
      ${preset('T', 'Letras estendidas', 'PP, P, M, G, GG, GG1, XGG, XXG', 'hov')}
      ${preset(ic('plusCircle', 18, 1.3), 'Plus size', 'G1, G2, G3, G4')}
    </div>
    <div class="close">${ic('x', 18, 1.3)}<span>Fechar</span></div>`
  }
}
customElements.define('size-panel', SizePanel)

class PriceBox extends Base {
  render () {
    return `<style>
      :host { display: flex; width: 319px; height: 59px; box-sizing: border-box; margin-top: 13px; border: 1px solid #f9a8d4; border-radius: 10px; }
      .c { width: 44px; border-right: 1px solid #f9a8d4; display: grid; place-items: center; font-size: 16px; font-weight: 600; color: #be185d; flex: none; padding-bottom: 2px; box-sizing: border-box; }
      .v { flex: 1; display: flex; align-items: center; justify-content: flex-end; padding: 0 10px 4px 0; font-family: "DejaVu Sans Mono", "Liberation Mono", monospace; font-size: 19px; font-style: italic; color: #a47b8e; letter-spacing: 1.700px; }
    </style>
    <div class="c">R$</div><div class="v">0,00</div>`
  }
}
customElements.define('price-box', PriceBox)

class ActionBar extends Base {
  render () {
    return `<style>
      :host { display: flex; align-items: center; height: 88px; box-sizing: border-box; margin-top: 20px; background: #fff; border: 1px solid #f1f2f4; border-radius: 24px; padding: 0 16px 0 14px; font-size: 14px; color: #374151; box-shadow: 0 10px 28px rgba(219,39,119,.1); }
      .i { color: #4b5563; margin-right: 13px; }
      .s { flex: 1; padding-bottom: 2px; }
      .chk { display: flex; align-items: center; gap: 14px; margin-right: 28px; color: #1f2937; padding-bottom: 2px; }
      .go { width: 248px; height: 56px; border-radius: 10px; background: linear-gradient(135deg, #db2777 0%, #ec4899 50%, #db2777 100%); color: #fff; font-weight: 600; display: flex; align-items: center; padding-left: 19px; box-sizing: border-box; gap: 13px; box-shadow: 0 8px 18px rgba(219,39,119,.18); }
    </style>
    <div class="i">${ic('grid', 18, 1.4)}</div>
    <div class="s">Peça única (sem tamanhos nem cores).</div>
    <div class="chk">${ic('check', 14, 1.4)}<span>Salvar sem imprimir</span></div>
    <div class="go">${ic('tag', 17)}<span>Salvar e imprimir etiquetas</span></div>`
  }
}
customElements.define('action-bar', ActionBar)

class BottomBar extends Base {
  render () {
    return `<style>
      :host { display: flex; flex-direction: column; align-items: center; height: 60px; box-sizing: border-box; background: linear-gradient(95deg, #db2777 0%, #db2777 40%, #be185d 100%); font-size: 12px; color: #f8d7e5; padding-top: 11px; white-space: nowrap; }
      .a { display: flex; align-items: center; gap: 8px; line-height: 16px; }
      .a b { font-weight: 700; color: #fff; }
      .a svg { color: #dca32a; }
      .z { display: flex; align-items: center; line-height: 16px; margin-top: 4px; font-size: 11px; margin-left: -8px; }
      .z i { font-style: normal; margin: 0 20px; font-size: 8px; }
      .z i.first { margin: 0 18px 0 12px; }
      .g { color: #e6b13f; }
      .m { font-family: "Liberation Mono", monospace; font-size: 11px; color: #dfb03c; letter-spacing: .5px; }
    </style>
    <div class="a">${ic('building', 12)}<span>SISTEMA LICENCIADO PARA: <b>99..50.8.5/08/0-001-08 - DEMO MODA E ESTILO CONFECCOES LTDA</b></span></div>
    <div class="z"><span>© 2026 Sistema ERP. Todos os direitos reservados.</span><i class="first">•</i><span class="g">Ajuda</span><i>•</i><span class="g">Termos</span><i>•</i><span class="g">Termo de Adesao</span><i>•</i><span class="m">Versão: 4.0.0 - Build 18688 | 01/08/2026 10:46</span></div>`
  }
}
customElements.define('bottom-bar', BottomBar)

class SideTab extends Base {
  render () {
    return `<style>
      :host { position: absolute; left: 1396px; top: 817px; width: 44px; height: 66px; border-radius: 10px 0 0 10px; background: rgba(219,39,119,.55); box-shadow: -2px 2px 8px rgba(0,0,0,.12); display: grid; place-items: center; color: #d96a9e; }
    </style>${ic('chevLeft', 14, 1.5)}`
  }
}
customElements.define('side-tab', SideTab)

/**
 * Orange highlight of the tutorial, sits over the form.
 * Takes page coordinates in its attributes x, y, w, h.
 */
class AnnoBox extends Base {
  render () {
    const a = (n) => this.getAttribute(n)
    return `<style>
      :host { position: absolute; left: ${a('x')}px; top: ${a('y')}px; width: ${a('w')}px; height: ${a('h')}px; box-sizing: border-box; border: 5px solid #f5541c; border-radius: 12px; background: rgba(244,81,30,.15); }
    </style>`
  }
}
customElements.define('anno-box', AnnoBox)

class AnnoNum extends Base {
  render () {
    const a = (n) => this.getAttribute(n)
    return `<style>
      :host { position: absolute; left: ${a('x') - 25}px; top: ${a('y') - 25}px; width: 50px; height: 50px; box-sizing: border-box; border: 3px solid #fff; border-radius: 50%; background: #f5541c; color: #fff; font-size: 28px; font-weight: 700; display: grid; place-items: center; }
    </style><slot></slot>`
  }
}
customElements.define('anno-num', AnnoNum)
</script>
</body>
</html>
